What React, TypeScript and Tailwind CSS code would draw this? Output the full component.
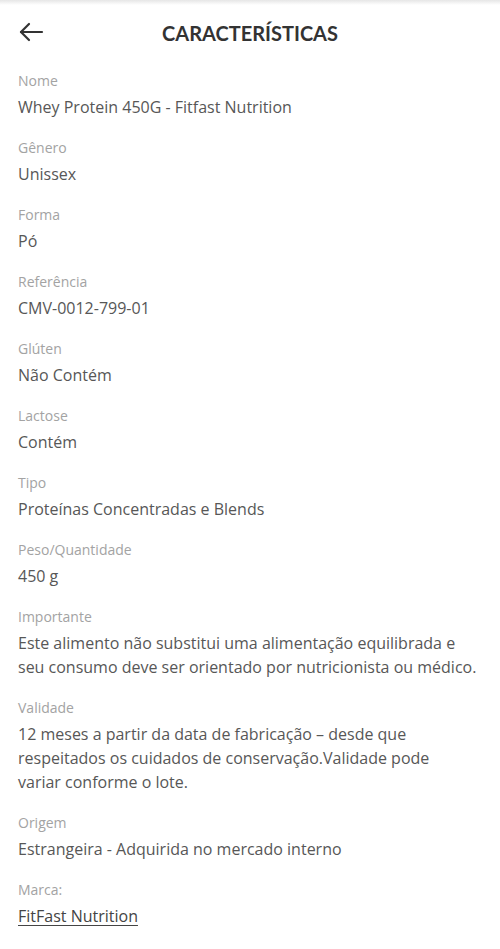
import React from "react";

const items: { label: string; lines: string[]; link?: boolean }[] = [
  { label: "Nome", lines: ["Whey Protein 450G - Fitfast Nutrition"] },
  { label: "Gênero", lines: ["Unissex"] },
  { label: "Forma", lines: ["Pó"] },
  { label: "Referência", lines: ["CMV-0012-799-01"] },
  { label: "Glúten", lines: ["Não Contém"] },
  { label: "Lactose", lines: ["Contém"] },
  { label: "Tipo", lines: ["Proteínas Concentradas e Blends"] },
  { label: "Peso/Quantidade", lines: ["450 g"] },
  {
    label: "Importante",
    lines: [
      "Este alimento não substitui uma alimentação equilibrada e",
      "seu consumo deve ser orientado por nutricionista ou médico.",
    ],
  },
  {
    label: "Validade",
    lines: [
      "12 meses a partir da data de fabricação – desde que",
      "respeitados os cuidados de conservação.Validade pode",
      "variar conforme o lote.",
    ],
  },
  { label: "Origem", lines: ["Estrangeira - Adquirida no mercado interno"] },
  { label: "Marca:", lines: ["FitFast Nutrition"], link: true },
];

export default function App() {
  return (
    <div
      className="w-[500px] min-h-[949px] bg-white"
      style={{ fontFamily: "'Open Sans', Lato, sans-serif" }}
    >
      <div className="h-[5px] bg-gradient-to-b from-[#e6e6e6] to-white" />
      <div className="relative flex h-[55px] items-center justify-center">
        <button className="absolute left-[18px] top-[16px] text-[#333]">
          <svg width="26" height="22" viewBox="0 0 26 22" fill="none" stroke="#333" strokeWidth="2.2" strokeLinecap="round" strokeLinejoin="round">
            <path d="M24 11H3" />
            <path d="M11 3L3 11L11 19" />
          </svg>
        </button>
        <h1 className="text-[20px] font-bold text-[#333]" style={{ fontFamily: "Lato, sans-serif" }}>CARACTERÍSTICAS</h1>
      </div>
      <div className="flex flex-col px-[18px] pt-[6px]">
        {items.map((it) => (
          <div key={it.label} className="flex flex-col pb-[14px]">
            <div className="text-[14px] leading-[29px] text-[#a3a3a3]">{it.label}</div>
            <div
              className={
                "text-[16px] leading-[24px] " +
                (it.link ? "underline underline-offset-[3px] text-[#444]" : "text-[#575757]")
              }
            >
              {it.lines.map((l, i) => (
                <div key={i} className="whitespace-nowrap">
                  {l}
                </div>
              ))}
            </div>
          </div>
        ))}
      </div>
    </div>
  );
}
